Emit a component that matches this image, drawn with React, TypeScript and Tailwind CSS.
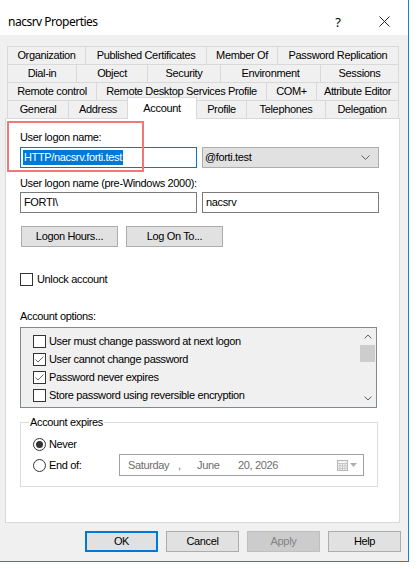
import React from "react";

type T = { l: string; c: string };

const row1: T[] = [
  { l: "Organization", c: "w-[78px] border-l" },
  { l: "Published Certificates", c: "w-[121px] border-l" },
  { l: "Member Of", c: "w-[71px] border-l" },
  { l: "Password Replication", c: "w-[122px] border-l border-r" },
];
const row2: T[] = [
  { l: "Dial-in", c: "w-[69px] border-l" },
  { l: "Object", c: "w-[71px] border-l" },
  { l: "Security", c: "w-[73px] border-l" },
  { l: "Environment", c: "w-[100px] border-l" },
  { l: "Sessions", c: "w-[79px] border-l border-r" },
];
const row3: T[] = [
  { l: "Remote control", c: "w-[89px] border-l" },
  { l: "Remote Desktop Services Profile", c: "w-[170px] border-l" },
  { l: "COM+", c: "w-[50px] border-l" },
  { l: "Attribute Editor", c: "w-[83px] border-l border-r" },
];

function Tab({ t }: { t: T }) {
  return (
    <div
      className={`h-[18px] shrink-0 border-t border-[#d9d9d9] bg-[#f0f0f0] flex items-center justify-center whitespace-nowrap ${t.c}`}
    >
      {t.l}
    </div>
  );
}

function TabRow({ items }: { items: T[] }) {
  return (
    <div className="flex h-[18px] pl-[7px]">
      {items.map((t) => (
        <Tab key={t.l} t={t} />
      ))}
    </div>
  );
}

function CheckBox({ checked }: { checked?: boolean }) {
  return (
    <div className="w-[13px] h-[13px] shrink-0 border border-[#333333] bg-white flex items-center justify-center">
      {checked && (
        <svg width="11" height="11" viewBox="0 0 11 11">
          <path d="M1.5 5.5 L4 8 L9.5 2.5" fill="none" stroke="#666666" strokeWidth="1" />
        </svg>
      )}
    </div>
  );
}

function Radio({ checked }: { checked?: boolean }) {
  return (
    <div className="w-[13px] h-[13px] shrink-0 rounded-full border border-[#333333] bg-white flex items-center justify-center">
      {checked && <div className="w-[7px] h-[7px] rounded-full bg-[#333333]" />}
    </div>
  );
}

function Btn({ label, extra }: { label: string; extra?: string }) {
  return (
    <div
      className={`h-[21px] flex items-center justify-center ${
        extra ?? "w-[97px] bg-[#e1e1e1] border border-[#adadad]"
      }`}
    >
      {label}
    </div>
  );
}

export default function App() {
  return (
    <div className="w-[417px] h-[569px] bg-white font-['Liberation_Sans',Arial,sans-serif] text-[11px] leading-[13px] tracking-[-0.35px] text-black">
      <div className="w-[409px] h-[562px] bg-[#f0f0f0] border-r border-b border-[#1883d7] flex flex-col relative">
        {/* title bar */}
        <div className="h-[35px] bg-white flex items-start pt-[14px] pl-[8px] font-['Noto_Sans',sans-serif] text-[12px] leading-[16px] tracking-[-0.5px]">
          <div className="flex-1">nacsrv Properties</div>
          <div className="w-[10px] text-center mr-[36px] text-[13px] tracking-normal">?</div>
          <div className="mr-[18px] mt-[2px]">
            <svg width="11" height="11" viewBox="0 0 11 11">
              <path d="M0.5 0.5 L10.5 10.5 M10.5 0.5 L0.5 10.5" stroke="#222" strokeWidth="1" />
            </svg>
          </div>
        </div>

        {/* tabs */}
        <div className="mt-[11px] flex flex-col">
          <TabRow items={row1} />
          <TabRow items={row2} />
          <TabRow items={row3} />
          <div className="flex h-[18px] pl-[7px] items-end">
            <Tab t={{ l: "General", c: "w-[61px] border-l" }} />
            <Tab t={{ l: "Address", c: "w-[59px] border-l" }} />
            <div className="h-[22px] -mb-px relative z-10 w-[70px] shrink-0 bg-white border-t border-l border-r border-[#d9d9d9] flex items-center justify-center">
              Account
            </div>
            <Tab t={{ l: "Profile", c: "w-[49px]" }} />
            <Tab t={{ l: "Telephones", c: "w-[79px] border-l" }} />
            <Tab t={{ l: "Delegation", c: "w-[74px] border-l border-r" }} />
          </div>
        </div>

        {/* panel */}
        <div className="ml-[5px] w-[395px] h-[405px] bg-white border border-[#d9d9d9] pl-[14px] flex flex-col">
          <div className="mt-[12px]">User logon name:</div>
          <div className="mt-[3px] flex gap-[5px]">
            <div className="w-[177px] h-[21px] border border-[#0078d7] flex items-center pl-[2px]">
              <span className="bg-[#0078d7] text-white leading-[15px] px-[1px]">HTTP/nacsrv.forti.test</span>
            </div>
            <div className="w-[177px] h-[21px] bg-[#e1e1e1] border border-[#adadad] flex items-center pl-[2px] pr-[8px]">
              <span className="flex-1">@forti.test</span>
              <svg width="9" height="5" viewBox="0 0 9 5">
                <path d="M0.5 0.5 L4.5 4.5 L8.5 0.5" fill="none" stroke="#606060" strokeWidth="1" />
              </svg>
            </div>
          </div>
          <div className="mt-[9px]">User logon name (pre-Windows 2000):</div>
          <div className="mt-[2px] flex gap-[5px]">
            <div className="w-[177px] h-[21px] border border-[#7a7a7a] flex items-center pl-[3px]">FORTI\</div>
            <div className="w-[177px] h-[21px] border border-[#7a7a7a] flex items-center pl-[3px]">nacsrv</div>
          </div>
          <div className="mt-[13px] flex gap-[8px] pl-[1px]">
            <Btn label="Logon Hours..." />
            <Btn label="Log On To..." />
          </div>
          <div className="mt-[26px] flex items-center gap-[4px] h-[13px]">
            <CheckBox />
            <span>Unlock account</span>
          </div>
          <div className="mt-[24px]">Account options:</div>
          <div className="mt-[4px] w-[357px] h-[81px] border border-[#828790] bg-[#f0f0f0] flex">
            <div className="flex-1 pl-[12px] pt-[4px] flex flex-col">
              {[
                ["User must change password at next logon", false],
                ["User cannot change password", true],
                ["Password never expires", true],
                ["Store password using reversible encryption", false],
              ].map(([l, c]) => (
                <div key={l as string} className="h-[18px] flex items-center gap-[3px]">
                  <CheckBox checked={c as boolean} />
                  <span>{l as string}</span>
                </div>
              ))}
            </div>
            <div className="w-[17px] flex flex-col items-center">
              <div className="h-[17px] flex items-center justify-center">
                <svg width="8" height="5" viewBox="0 0 8 5">
                  <path d="M0.5 4.5 L4 1 L7.5 4.5" fill="none" stroke="#606060" strokeWidth="1" />
                </svg>
              </div>
              <div className="w-[15px] h-[17px] bg-[#cdcdcd]" />
              <div className="flex-1" />
              <div className="h-[17px] flex items-center justify-center">
                <svg width="8" height="5" viewBox="0 0 8 5">
                  <path d="M0.5 0.5 L4 4 L7.5 0.5" fill="none" stroke="#606060" strokeWidth="1" />
                </svg>
              </div>
            </div>
          </div>

          {/* group */}
          <div className="mt-[14px] w-[358px] h-[65px] border border-[#dcdcdc] relative flex flex-col pl-[12px]">
            <div className="absolute left-[8px] top-[-7px] bg-white px-[1px]">Account expires</div>
            <div className="mt-[15px] h-[13px] flex items-center gap-[3px]">
              <Radio checked />
              <span>Never</span>
            </div>
            <div className="mt-[3px] h-[22px] flex items-center">
              <Radio />
              <span className="ml-[3px] w-[70px]">End of:</span>
              <div className="w-[245px] h-[22px] border border-[#a0a0a0] flex items-center pl-[8px] text-[#6d6d6d] relative">
                <span className="w-[50px]">Saturday</span>
                <span className="w-[19px]">,</span>
                <span className="w-[41px]">June</span>
                <span>20, 2026</span>
                <div className="flex-1" />
                <div className="flex items-center gap-[2px] mr-[6px]">
                  <svg width="11" height="11" viewBox="0 0 11 11">
                    <rect x="0.5" y="0.5" width="10" height="10" fill="#f4f4f4" stroke="#b5b5b5" />
                    <path d="M0.5 3.5 H10.5 M0.5 6 H10.5 M0.5 8.5 H10.5 M3 3.5 V10.5 M5.5 3.5 V10.5 M8 3.5 V10.5" stroke="#c8c8c8" strokeWidth="1" />
                  </svg>
                  <svg width="7" height="4" viewBox="0 0 7 4">
                    <path d="M0 0 L7 0 L3.5 4 Z" fill="#b0b0b0" />
                  </svg>
                </div>
              </div>
            </div>
          </div>
        </div>

        {/* bottom buttons */}
        <div className="mt-[8px] flex justify-end gap-[8px] pr-[7px]">
          <Btn label="OK" extra="w-[73px] bg-[#e1e1e1] border-2 border-[#0078d7]" />
          <Btn label="Cancel" extra="w-[73px] bg-[#e1e1e1] border border-[#adadad]" />
          <Btn label="Apply" extra="w-[73px] bg-[#cccccc] border border-[#bfbfbf] text-[#838383]" />
          <Btn label="Help" extra="w-[73px] bg-[#e1e1e1] border border-[#adadad]" />
        </div>

        {/* red annotation rectangle */}
        <div className="absolute left-[7px] top-[121px] w-[137px] h-[51px] border-2 border-[#f07878] pointer-events-none" />
      </div>
    </div>
  );
}
